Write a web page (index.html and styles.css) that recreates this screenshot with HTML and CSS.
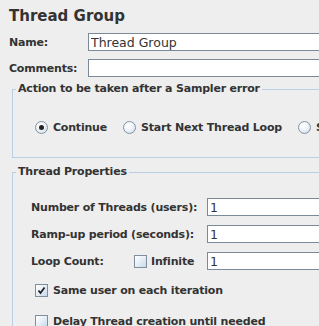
FILE: index.html
```html
<!DOCTYPE html>
<html lang="en">
<head>
  <meta charset="UTF-8" />
  <title>Thread Group</title>
  <link rel="stylesheet" href="styles.css">
</head>
<body>
  <div class="panel">
    <h1>Thread Group</h1>

    <div class="field-row">
      <label for="name">Name:</label>
      <input id="name" class="text-input" type="text" value="Thread Group">
    </div>
    <div class="field-row">
      <label for="comments">Comments:</label>
      <input id="comments" class="text-input" type="text" value="">
    </div>

    <fieldset class="group on-error">
      <legend>Action to be taken after a Sampler error</legend>
      <div class="options">
        <span class="option"><span class="radio checked"></span>Continue</span>
        <span class="option"><span class="radio"></span>Start Next Thread Loop</span>
        <span class="option"><span class="radio"></span>Stop Thread</span>
      </div>
    </fieldset>

    <fieldset class="group props">
      <legend>Thread Properties</legend>
      <div class="props-grid">
        <label>Number of Threads (users):</label>
        <input class="text-input" type="text" value="1">

        <label>Ramp-up period (seconds):</label>
        <input class="text-input" type="text" value="1">

        <div class="loop-label">
          <span class="loop-name">Loop Count:</span>
          <span class="option"><span class="checkbox"></span>Infinite</span>
        </div>
        <input class="text-input" type="text" value="1">
      </div>

      <div class="check-row first">
        <span class="checkbox checked">
          <svg width="9" height="9" viewBox="0 0 9 9"><path d="M1.5 4.5 L3.5 7 L7.5 1.5" fill="none" stroke="#222" stroke-width="1.8"/></svg>
        </span>
        Same user on each iteration
      </div>
      <div class="check-row">
        <span class="checkbox"></span>
        Delay Thread creation until needed
      </div>
    </fieldset>
  </div>
</body>
</html>
```

FILE: styles.css
```css
html {
  overflow: hidden;
}

body {
  margin: 0;
  background: #eeeeee;
  color: #333333;
  font-family: "DejaVu Sans", sans-serif;
  font-size: 11px;
  font-weight: 700;
  letter-spacing: -0.2px;
}

.panel {
  width: 440px;
  padding-top: 7px;
}

h1 {
  margin: 0 0 0 9px;
  font-size: 15px;
  line-height: 18px;
  letter-spacing: 0;
}

.field-row {
  display: flex;
  align-items: center;
  height: 18px;
  margin: 8px 0 0 9px;
}

.field-row label {
  width: 79px;
  flex: none;
}

.text-input {
  flex: 1;
  min-width: 0;
  height: 18px;
  box-sizing: border-box;
  margin: 0;
  padding: 0 2px;
  border: 1px solid #7a8a99;
  border-radius: 0;
  background: #ffffff;
  color: #333333;
  font-family: "DejaVu Sans", sans-serif;
  font-size: 12.5px;
  font-weight: 400;
  letter-spacing: 0;
  outline: none;
}

.group {
  margin: 0 0 0 12px;
  padding: 0;
  border: 1px solid #b8cfe5;
  min-width: 0;
}

.group legend {
  margin-left: 3px;
  padding: 0 2px;
  line-height: 14px;
}

.on-error {
  margin-top: 5px;
}

.options {
  display: flex;
  align-items: center;
  gap: 16px;
  height: 14px;
  padding: 24px 0 23px 22px;
  white-space: nowrap;
}

.option {
  display: flex;
  align-items: center;
  gap: 5px;
  white-space: nowrap;
}

.radio {
  width: 11px;
  height: 11px;
  border: 1px solid #8594a3;
  border-radius: 50%;
  background: radial-gradient(circle at 40% 35%, #ffffff 0%, #eef3f8 45%, #c3d4e6 100%);
  flex: none;
  position: relative;
}

.radio.checked::after {
  content: "";
  position: absolute;
  left: 3px;
  top: 3px;
  width: 5px;
  height: 5px;
  border-radius: 50%;
  background: #222222;
}

.props {
  margin-top: 7px;
}

.props-grid {
  display: grid;
  grid-template-columns: 176px 1fr;
  grid-auto-rows: 18px;
  row-gap: 9px;
  align-items: center;
  padding: 19px 0 0 18px;
}

.loop-label {
  display: flex;
  align-items: center;
}

.loop-name {
  width: 103px;
}

.checkbox {
  width: 11px;
  height: 11px;
  border: 1px solid #7f8e9d;
  background: linear-gradient(135deg, #ffffff 0%, #e6eef6 50%, #c6d7e8 100%);
  flex: none;
  display: flex;
  align-items: center;
  justify-content: center;
}

.option .checkbox {
  margin-right: -1px;
}

.check-row {
  display: flex;
  align-items: center;
  gap: 5px;
  height: 13px;
  margin: 18px 0 0 22px;
  white-space: nowrap;
}

.check-row.first {
  margin-top: 14px;
}
```
